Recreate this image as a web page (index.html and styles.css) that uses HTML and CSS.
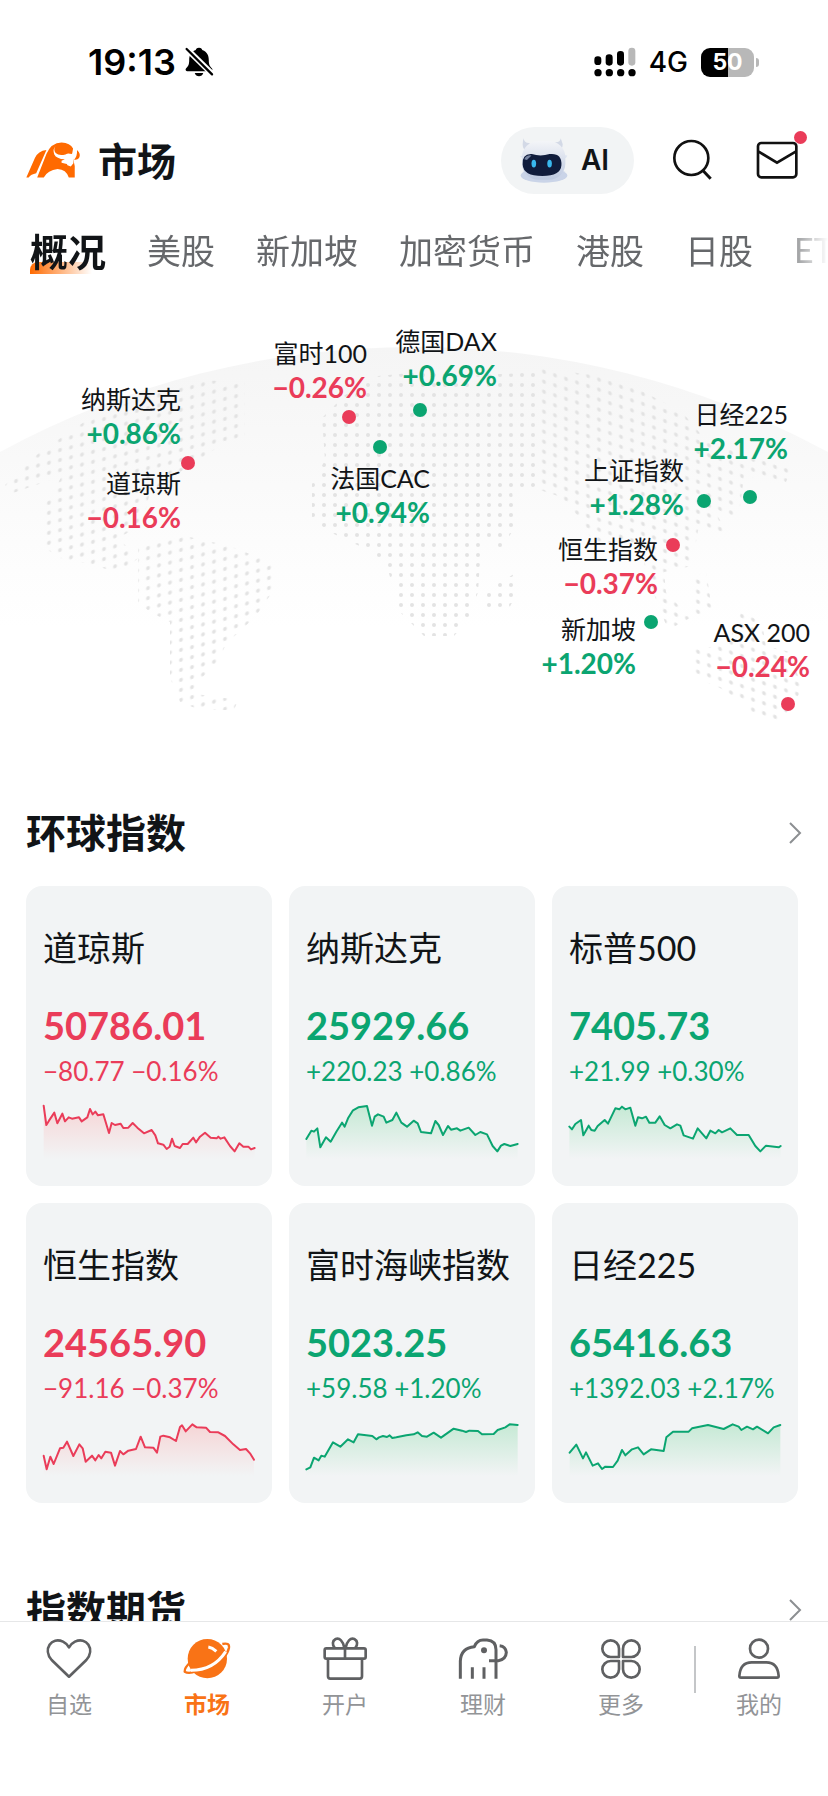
FILE: index.html
```html
<!DOCTYPE html>
<html lang="zh-CN">
<head>
  <meta charset="UTF-8">
  <meta name="viewport" content="width=device-width, initial-scale=1.0">
  <script defer src="script.js"></script>
  <title>市场</title>
  <link rel="stylesheet" href="styles.css">
</head>

<body>
  <!-- STATUS BAR -->
  <div class="status">
    <span class="time">19:13</span>
    <svg class="bell" viewBox="0 0 84 92">
      <path d="M42 2c-7 0-9 4-10 7C16 14 12 28 12 40c0 16-4 20-10 26-3 4 0 8 4 8h72c4 0 7-4 4-8-6-6-10-10-10-26 0-12-4-26-20-31-1-3-3-7-10-7z"/>
      <path d="M29 80h26c-2 7-7 10-13 10s-11-3-13-10z"/>
      <path d="M4 6l78 76" stroke="#fff" stroke-width="18"/>
      <path d="M4 6l78 78" stroke="#000" stroke-width="7" stroke-linecap="round"/>
    </svg>
    <svg class="signal" viewBox="0 0 126 90">
      <rect x="1" y="28" width="21" height="26" rx="10"/>
      <rect x="35" y="22" width="21" height="34" rx="10"/>
      <rect x="69" y="12" width="21" height="44" rx="10"/>
      <rect x="103" y="2" width="21" height="54" rx="10" fill="#b8b8b8"/>
      <circle cx="12" cy="77" r="11"/><circle cx="46" cy="77" r="11"/><circle cx="80" cy="77" r="11"/><circle cx="114" cy="77" r="11"/>
    </svg>
    <span class="network">4G</span>
    <span class="battery">50</span>
  </div>

  <header>
    <svg class="logo" viewBox="0 0 164 108">
      <g fill="#ff6a00">
        <path d="M1 107L27 48Q37 27 62 24L31 94Q15 97 8 107Z"/>
        <path d="M34 107L62 36Q76 2 108 1Q134 2 143 19L140 36L148 72V107H130Q122 82 96 81Q66 84 54 107Z"/>
        <path d="M155 24Q168 36 161 48Q156 55 146 53Q156 44 155 24Z"/>
      </g>
      <path d="M90 11Q82 22 90 33Q100 42 120 37Q128 32 138 36Q147 35 152 27Q154 42 144 50V64L136 74L126 70L124 66L108 62V56L118 52Q92 50 86 37Q80 22 90 11Z" fill="#fff"/>
    </svg>
    <h1>市场</h1>
    <button class="ai">
      <svg viewBox="0 0 150 140">
        <defs>
          <linearGradient id="shell" x2="0" y2="1"><stop offset="0" stop-color="#f4f5f8"/><stop offset="1" stop-color="#bcc8e0"/></linearGradient>
        </defs>
        <ellipse cx="75" cy="117" rx="71" ry="22" fill="#cad4e8"/>
        <path d="M12 4q4 16 20 14l-8 26q-14-6-14-22zM126 4q-2 14-18 12l8 28q16-6 16-22z" fill="#d3d9e6"/>
        <path d="M2 58q70-12 144-2l-4 8H8z" fill="#dfe5f2"/>
        <rect x="8" y="12" width="132" height="118" rx="50" fill="url(#shell)"/>
        <path d="M10 84q-2-34 28-32 26 8 54 0 38-4 36 34-2 32-58 33-58 0-60-35z" fill="#101c3c"/>
        <path d="M15 68q6-14 22-12l-14 14z" fill="#7683a0"/>
        <ellipse cx="44" cy="81" rx="7" ry="12" fill="#39b8ee"/>
        <ellipse cx="92" cy="81" rx="7" ry="12" fill="#39b8ee"/>
      </svg>
      AI
    </button>
    <button class="icon-btn search" aria-label="搜索">
      <svg viewBox="0 0 126 126"><circle cx="58" cy="57" r="51"/><path d="M92 94l24 25" stroke-width="9"/></svg>
    </button>
    <button class="icon-btn mail" aria-label="消息">
      <svg viewBox="0 0 126 126"><rect x="6" y="12" width="115" height="103" rx="10"/><path d="M8 38l55 33 56-33"/></svg>
      <i class="unread"></i>
    </button>
  </header>

  <nav class="tabs">
    <a href="#" class="active">概况</a>
    <a href="#">美股</a>
    <a href="#">新加坡</a>
    <a href="#">加密货币</a>
    <a href="#">港股</a>
    <a href="#">日股</a>
    <a href="#">ETF</a>
  </nav>

  <main>
    <!-- WORLD MAP -->
    <section class="map">
      <svg viewBox="0 0 828 440">
        <defs>
          <linearGradient id="globe" x2="0" y2="1">
            <stop offset="0" stop-color="#f5f5f5"/>
            <stop offset=".5" stop-color="#fafafa"/>
            <stop offset="1" stop-color="#fff"/>
          </linearGradient>
          <pattern id="dotsW" width="11" height="10" patternUnits="userSpaceOnUse" patternTransform="skewY(-14)"><circle cx="5" cy="5" r="2"/></pattern>
          <pattern id="dotsC" width="11" height="10" patternUnits="userSpaceOnUse"><circle cx="5" cy="5" r="2"/></pattern>
          <pattern id="dotsE" width="11" height="10" patternUnits="userSpaceOnUse" patternTransform="skewY(18)"><circle cx="5" cy="5" r="2"/></pattern>
        </defs>
        <path d="M0 152A868 868 0 0 1 828 152V326H0Z" fill="url(#globe)"/>
        <g fill="url(#dotsW)">
          <path d="M5 185L40 152L90 118L135 100L195 80L245 82V138L222 144L205 156L180 172L150 192L142 225L118 238L138 258L122 274L90 264L60 258L45 248V205L62 176L10 194Z"/>
          <path d="M138 246L185 236L230 246L275 264V288L256 316L226 344L216 366L196 382V394L238 400L234 410H200L180 402L170 378V322L150 312L138 302Z"/>
        </g>
        <g fill="url(#dotsC)">
          <path d="M322 118L345 95L378 76L420 72L462 76L540 72V186L512 190L516 226L500 250L488 240L480 262L478 292L470 318L454 336H424L400 312L388 270L368 250L334 234L312 220V184L325 160Z"/>
          <path d="M487 290L514 274L518 292L508 310H487Z"/>
        </g>
        <g fill="url(#dotsE)">
          <path d="M540 68L600 76L640 90L682 112L704 138L792 168L786 182L744 176L738 222L712 206L730 238L698 230L692 266L664 272L666 292L690 318L668 330L650 284L640 248L592 240L580 218L558 196L540 190Z"/>
          <path d="M690 280L706 270L712 310L690 318Z"/>
          <path d="M692 350L728 344L742 310L762 324L766 346L790 352L802 388L794 404L780 420H758L742 402L720 388L692 376Z"/>
        </g>
        <g class="red">
          <circle cx="188" cy="163" r="7"/><circle cx="349" cy="117" r="7"/><circle cx="673" cy="245" r="7"/><circle cx="788" cy="404" r="7"/>
        </g>
        <g class="green">
          <circle cx="380" cy="147" r="7"/><circle cx="420" cy="110" r="7"/><circle cx="704" cy="201" r="7"/><circle cx="750" cy="197" r="7"/><circle cx="651" cy="322" r="7"/>
        </g>
      </svg>
      <a href="#" class="pin nasdaq up">纳斯达克<b>+0.86%</b></a>
      <a href="#" class="pin dow down">道琼斯<b>−0.16%</b></a>
      <a href="#" class="pin ftse down">富时100<b>−0.26%</b></a>
      <a href="#" class="pin dax up">德国DAX<b>+0.69%</b></a>
      <a href="#" class="pin cac up">法国CAC<b>+0.94%</b></a>
      <a href="#" class="pin nikkei up">日经225<b>+2.17%</b></a>
      <a href="#" class="pin sse up">上证指数<b>+1.28%</b></a>
      <a href="#" class="pin hsi down">恒生指数<b>−0.37%</b></a>
      <a href="#" class="pin sti up">新加坡<b>+1.20%</b></a>
      <a href="#" class="pin asx down">ASX 200<b>−0.24%</b></a>
    </section>

    <!-- GLOBAL INDICES -->
    <section>
      <a href="#" class="section-head">
        <h2>环球指数</h2>
        <svg viewBox="0 0 12 22"><path d="M1 1l10 10L1 21"/></svg>
      </a>
      <div class="cards">
        <a href="#" class="card down">
          <h3>道琼斯</h3>
          <strong>50786.01</strong>
          <span>−80.77 −0.16%</span>
          <svg class="spark" data-points="2,14 10,72 18,59 34,35 43,67 58,38 66,61 77,49 87,53 108,49 116,61 133,49 141,24 149,40 157,32 165,43 181,40 198,96 206,66 216,72 233,68 241,81 256,80 269,66 283,80 303,97 326,87 337,103 345,127 361,131 371,144 380,137 387,113 395,135 411,141 419,129 434,129 451,110 459,124 471,107 486,95 503,110 521,112 526,107 533,113 544,109 561,135 575,151 589,127 601,137 616,137 624,145 635,141"></svg>
        </a>
        <a href="#" class="card up">
          <h3>纳斯达克</h3>
          <strong>25929.66</strong>
          <span>+220.23 +0.86%</span>
          <svg class="spark" data-points="1,114 16,89 24,92 34,82 43,139 60,109 74,122 91,92 108,65 116,77 126,52 141,28 157,19 183,15 198,74 206,47 216,40 233,47 241,65 259,57 271,35 286,65 303,77 323,59 335,67 345,93 375,97 388,60 398,72 411,102 426,75 435,86 453,82 463,89 488,80 508,102 523,93 543,100 560,135 574,151 585,134 595,129 613,135 635,129"></svg>
        </a>
        <a href="#" class="card up">
          <h3>标普500</h3>
          <strong>7405.73</strong>
          <span>+21.99 +0.30%</span>
          <svg class="spark" data-points="1,77 9,85 19,69 36,57 43,103 59,74 67,87 77,89 86,75 107,57 117,68 139,22 151,25 159,17 169,25 184,20 199,74 207,49 219,52 231,47 241,65 259,65 272,46 287,72 304,82 324,70 334,74 344,103 372,113 386,82 412,112 424,89 439,97 449,87 459,94 484,82 504,102 539,102 559,135 574,151 591,134 629,139 635,135"></svg>
        </a>
        <a href="#" class="card down">
          <h3>恒生指数</h3>
          <strong>24565.90</strong>
          <span>−91.16 −0.37%</span>
          <svg class="spark" data-points="2,113 11,154 22,116 32,138 51,91 61,89 72,71 91,114 109,79 119,91 128,131 147,113 157,127 167,111 175,121 187,101 204,104 216,143 231,99 241,109 256,98 279,93 293,56 306,88 331,89 342,104 352,56 361,53 381,58 399,69 411,27 417,22 428,40 448,19 461,28 489,29 501,42 526,43 546,54 571,79 591,96 609,93 621,106 633,125"></svg>
        </a>
        <a href="#" class="card up">
          <h3>富时海峡指数</h3>
          <strong>5023.25</strong>
          <span>+59.58 +1.20%</span>
          <svg class="spark" data-points="1,154 13,148 24,119 38,127 46,113 56,116 81,73 103,86 126,64 143,73 156,49 199,54 211,64 219,58 231,54 243,57 251,52 259,60 271,58 301,52 323,49 335,43 348,54 363,56 383,44 405,59 443,32 468,38 480,42 490,38 516,39 528,49 563,48 575,36 598,28 611,19 635,21"></svg>
        </a>
        <a href="#" class="card up">
          <h3>日经225</h3>
          <strong>65416.63</strong>
          <span>+1392.03 +2.17%</span>
          <svg class="spark" data-points="2,104 22,80 42,121 51,103 71,143 87,136 99,153 109,146 132,147 146,128 159,96 169,112 189,94 207,88 224,109 246,94 284,99 292,58 312,41 359,41 369,31 417,21 464,33 491,19 509,26 517,36 534,26 552,34 564,26 597,46 614,28 634,21"></svg>
        </a>
      </div>
    </section>

    <!-- INDEX FUTURES -->
    <section>
      <a href="#" class="section-head">
        <h2>指数期货</h2>
        <svg viewBox="0 0 12 22"><path d="M1 1l10 10L1 21"/></svg>
      </a>
    </section>
  </main>

  <nav class="tabbar">
    <a href="#">
      <svg viewBox="0 0 144 144"><path d="M72 125L20 75C-8 42 20 4 54 20Q66 26 72 37Q78 26 90 20C124 4 152 42 124 75Z"/></svg>
      自选
    </a>
    <a href="#" class="active">
      <svg viewBox="0 0 144 144">
        <path d="M118 27Q140 22 138 38Q135 54 122 68M22 82Q4 98 5 110Q18 118 40 108" stroke-width="7"/>
        <circle cx="73" cy="71" r="59" fill="#f97316" stroke="none"/>
        <path d="M24 106Q92 106 128 50" stroke="#fff" stroke-width="9"/>
        <path d="M76 36q12 2 24 13" stroke="#fff" stroke-width="9"/>
      </svg>
      市场
    </a>
    <a href="#">
      <svg viewBox="0 0 144 144"><rect x="11" y="40" width="123" height="31" rx="5"/><path d="M21 71V124Q21 131 28 131H116Q123 131 123 124V71M72 40V71M70 38C66 18 56 8 44 12C34 17 33 30 41 38M74 38C78 18 88 8 100 12C110 17 111 30 103 38"/></svg>
      开户
    </a>
    <a href="#">
      <svg viewBox="0 0 144 144"><path d="M4 131V78Q6 38 46 35Q54 15 72 15H84Q111 17 111 44V131M90 77H118Q141 73 142 52Q140 34 122 32M40 97V131M75 97V131" stroke-width="9"/><circle cx="75" cy="46" r="9" fill="#5f6062" stroke="none"/></svg>
      理财
    </a>
    <a href="#">
      <svg viewBox="0 0 144 144"><path d="M66 66V41A25 25 0 1 0 41 66ZM78 66V41A25 25 0 1 1 103 66ZM66 78V103A25 25 0 1 1 41 78ZM78 78V103A25 25 0 1 0 103 78Z"/></svg>
      更多
    </a>
    <a href="#" class="mine">
      <svg viewBox="0 0 144 144"><circle cx="72" cy="41" r="27"/><path d="M13 123Q16 82 50 82H94Q128 82 131 123Q131 128 126 128H18Q13 128 13 123Z"/></svg>
      我的
    </a>
  </nav>
</body>
</html>
```
FILE: styles.css
```css
:root {
  --text: #111417;
  --muted: #66686b;
  --panel: #f2f4f5;
  --accent: #f97316;
  --red: #ea3c59;
  --green: #0ba571;
}
* {box-sizing: border-box;}
body{margin:0;height:100vh;display:flex;flex-direction:column;background:#fff;color:var(--text);font-family:Lato,"Noto Sans CJK SC",sans-serif;}
a{color:inherit;text-decoration:none;}
h1,h2,h3{margin:0;}
button{padding:0;border:none;background:none;color:inherit;cursor:pointer;}
svg{display:block;flex:none;overflow:visible;}
.up b,.up strong,.up span{color:var(--green);}
.down b,.down strong,.down span{color:var(--red);}
.red{fill:var(--red);}
.green{fill:var(--green);}

/* status bar */
.status{flex:none;display:flex;align-items:center;height:124px;padding:0 74px 0 88px;font-family:Inter,sans-serif;color:#000;}
.time{font-size:36px;font-weight:600;}
.bell{width:28px;height:30px;margin-left:9px;}
.signal{width:42px;height:30px;margin-left:auto;}
.network{margin:0 13px;font-size:28px;font-weight:500;}
.battery{position:relative;width:53px;height:29px;border-radius:9px;background:linear-gradient(90deg,#000 50%,#b8b8b8 50%);color:#fff;font-size:23px;font-weight:700;line-height:29px;text-align:center;}
.battery::after{content:"";position:absolute;right:-5px;top:10px;width:3px;height:9px;border-radius:0 3px 3px 0;background:#b8b8b8;}

/* header */
header{flex:none;display:flex;align-items:center;height:72px;padding:0 30px 0 26px;}
.logo{width:54px;height:36px;}
h1{margin-left:18px;padding-top:2px;font-size:39px;line-height:56px;}
.ai{display:flex;align-items:center;gap:12px;height:67px;margin-left:auto;padding:0 25px 0 18px;border-radius:34px;background:var(--panel);font:600 28px Inter,sans-serif;}
.ai svg{width:50px;height:46px;}
.icon-btn{position:relative;margin-left:42px;}
.icon-btn.search{margin-left:38px;}
.icon-btn svg{width:42px;height:42px;fill:none;stroke:#111;stroke-width:8;}
.unread{position:absolute;right:-9px;top:-8px;width:13px;height:13px;border-radius:50%;background:var(--red);}

/* market tabs */
.tabs{flex:none;display:flex;align-items:center;gap:41px;height:104px;padding:2px 0 0 30px;overflow:hidden;white-space:nowrap;font-size:34px;color:var(--muted);-webkit-mask-image:linear-gradient(90deg,#000 94%,transparent);mask-image:linear-gradient(90deg,#000 94%,transparent);}
.tabs a{flex:none;}
.tabs .active{position:relative;z-index:0;font-size:38px;font-weight:700;color:var(--text);}
.tabs .active::before{content:"";position:absolute;z-index:-1;left:0;bottom:3px;width:62px;height:12px;border-radius:8px 0 0 0;background:linear-gradient(90deg,#ff6a00,#ff6a0000);}

main{flex:1;min-height:0;overflow:hidden;}

/* world map */
.map{position:relative;height:505px;}
.map pattern{fill:#e3e3e3;}
.pin{position:absolute;font-size:25px;line-height:34px;text-align:right;white-space:nowrap;}
.pin b{display:block;font-size:28px;}
.nasdaq{right:647px;top:82px;}
.dow{right:647px;top:166px;}
.ftse{right:461px;top:36px;}
.dax{right:331px;top:24px;}
.cac{right:398px;top:161px;}
.nikkei{right:40px;top:97px;}
.sse{right:144px;top:153px;}
.hsi{right:170px;top:232px;}
.sti{right:192px;top:312px;}
.asx{right:18px;top:315px;}

/* index cards */
.section-head{display:flex;align-items:center;justify-content:space-between;padding:0 27px 0 26px;}
.section-head h2{font-size:40px;line-height:56px;}
.section-head svg{width:12px;height:22px;fill:none;stroke:#8c8f92;stroke-width:2;}
.cards{display:grid;grid-template-columns:repeat(3,1fr);gap:17px;padding:25px 30px 79px 26px;}
.card{display:flex;flex-direction:column;padding:40px 17px 27px;border-radius:16px;background:var(--panel);white-space:nowrap;}
.card h3{font-size:34px;font-weight:400;line-height:44px;}
.card strong{margin-top:32px;font-size:38px;line-height:46px;}
.card span{margin-top:6px;font-size:26px;line-height:34px;}
.spark{width:100%;height:58px;margin-top:13px;}
.spark polyline{fill:none;stroke-width:6;stroke-linejoin:round;stroke-linecap:round;}
.up .spark polyline{stroke:var(--green);}
.down .spark polyline{stroke:var(--red);}

/* bottom tab bar */
.tabbar{flex:none;display:grid;grid-template-columns:repeat(6,1fr);height:175px;padding-top:13px;border-top:1px solid #e6e7e8;background:#fff;}
.tabbar a{display:flex;flex-direction:column;align-items:center;gap:5px;font-size:23px;line-height:32px;color:#929497;}
.tabbar svg{width:48px;height:48px;fill:none;stroke:#5f6062;stroke-width:8;stroke-linejoin:round;}
.tabbar .active{color:var(--accent);font-weight:700;}
.tabbar .active svg{stroke:var(--accent);}
.tabbar .mine{position:relative;}
.tabbar .mine::before{content:"";position:absolute;left:4px;top:11px;width:2px;height:47px;background:#c4c6c8;}
```
FILE: script.js
```js
// sparklines: a line plus a fading area under it
const W = 636, H = 174;

document.querySelectorAll('.spark').forEach((svg, i) => {
  const pts = svg.dataset.points;
  const first = pts.split(' ')[0].split(',')[0];
  const last = pts.split(' ').pop().split(',')[0];
  const color = svg.closest('.up') ? '#5fd08a' : '#ff8d8d';

  svg.setAttribute('viewBox', `0 0 ${W} ${H}`);
  svg.setAttribute('preserveAspectRatio', 'none');
  svg.innerHTML = `
    <linearGradient id="fade${i}" x2="0" y2="1">
      <stop offset="0" stop-color="${color}" stop-opacity=".3"/>
      <stop offset="1" stop-color="${color}" stop-opacity="0"/>
    </linearGradient>
    <polygon points="${first},${H} ${pts} ${last},${H}" fill="url(#fade${i})"/>
    <polyline points="${pts}"/>`;
});
```
